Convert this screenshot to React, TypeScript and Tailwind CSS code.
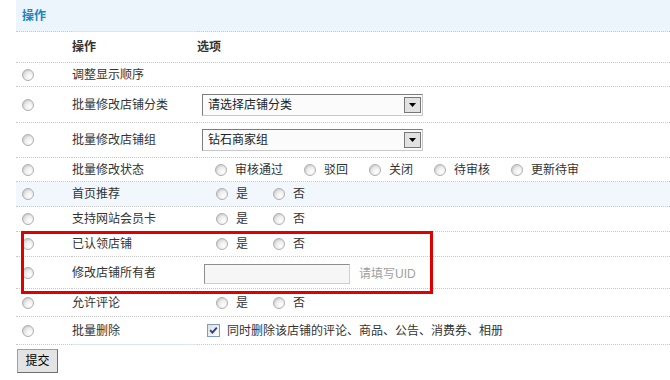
import React from 'react';

const font = "font-['Liberation_Sans','Noto_Sans_CJK_SC',sans-serif]";

function Radio() {
    return (
        <svg width="12" height="12" viewBox="0 0 12 12" className="shrink-0">
            <defs>
                <radialGradient id="radioFill" cx="65%" cy="68%" r="75%">
                    <stop offset="0" stopColor="#ffffff" />
                    <stop offset="0.55" stopColor="#ececec" />
                    <stop offset="1" stopColor="#c4c4c4" />
                </radialGradient>
            </defs>
            <circle cx="6" cy="6" r="5.5" fill="url(#radioFill)" stroke="#b0b0b0" />
        </svg>
    );
}

function Checkbox() {
    return (
        <svg width="13" height="13" viewBox="0 0 13 13" className="shrink-0">
            <defs>
                <linearGradient id="cbFill" x1="0" y1="0" x2="1" y2="1">
                    <stop offset="0" stopColor="#dcdcd7" />
                    <stop offset="1" stopColor="#ffffff" />
                </linearGradient>
            </defs>
            <rect x="0.5" y="0.5" width="12" height="12" fill="url(#cbFill)" stroke="#7f9db9" />
            <path d="M3.2 6.2 L5.4 8.6 L9.8 3.6" fill="none" stroke="#21399c" strokeWidth="1.8" />
        </svg>
    );
}

function Select({ label }: { label: string }) {
    return (
        <div className="ml-[5px] flex h-[22px] w-[221px] items-center justify-between border border-t-[#7c7c7c] border-l-[#7c7c7c] border-r-[#c8c8c8] border-b-[#c8c8c8] bg-[#fbfbfb] pl-[5px] pr-[1px] text-[#222]">
            <span>{label}</span>
            <div className="flex h-[16px] w-[17px] items-center justify-center border border-[#777] bg-[#e2e2e2]">
                <svg width="7" height="4" viewBox="0 0 7 4">
                    <path d="M0 0 H7 L3.5 4 Z" fill="#000" />
                </svg>
            </div>
        </div>
    );
}

function Option({ label }: { label: string }) {
    return (
        <span className="flex items-center">
            <Radio />
            <span className="ml-2">{label}</span>
        </span>
    );
}

function YesNo() {
    return (
        <div className="flex items-center gap-[25px] pl-[19px]">
            <Option label="是" />
            <Option label="否" />
        </div>
    );
}

function Row({ height, label, hover, last, children }: {
    height: string;
    label: string;
    hover?: boolean;
    last?: boolean;
    children?: React.ReactNode;
}) {
    return (
        <div className={`flex ${height} ${hover ? 'bg-[#f1f7fc]' : ''}`}>
            <div className="flex w-[56px] items-center border-b border-dotted border-[#c9c9c9] pl-[6px]">
                <Radio />
            </div>
            <div className={`flex w-[125px] items-center ${last ? 'border-b border-solid border-[#dbe8f3]' : 'border-b border-dotted border-[#c9c9c9]'}`}>
                {label}
            </div>
            <div className="flex flex-1 items-center border-b border-dotted border-[#c9c9c9]">
                {children}
            </div>
        </div>
    );
}

export default function App() {
    return (
        <div className={`relative h-[380px] w-[670px] overflow-hidden bg-white text-[12px] leading-none text-[#333] ${font}`}>
            <div className="pl-4">
                {/* Title band */}
                <div className="flex h-[32px] bg-[#edf5fc]">
                    <div className="flex w-[56px] items-center border-b border-dotted border-[#c9c9c9] pl-[6px] font-bold text-[#1786bf]">
                        操作
                    </div>
                    <div className="w-[125px] border-b border-solid border-[#dbe8f3]" />
                    <div className="flex-1 border-b border-dotted border-[#c9c9c9]" />
                </div>

                {/* Column headers */}
                <div className="flex h-[31px] border-b border-dotted border-[#c9c9c9] font-bold">
                    <div className="w-[56px]" />
                    <div className="flex w-[125px] items-center">操作</div>
                    <div className="flex items-center">选项</div>
                </div>

                <Row height="h-[24px]" label="调整显示顺序" />
                <Row height="h-[36px]" label="批量修改店铺分类">
                    <Select label="请选择店铺分类" />
                </Row>
                <Row height="h-[35px]" label="批量修改店铺组">
                    <Select label="钻石商家组" />
                </Row>
                <Row height="h-[24px]" label="批量修改状态">
                    <div className="flex items-center gap-[21px] pl-[18px]">
                        <Option label="审核通过" />
                        <Option label="驳回" />
                        <Option label="关闭" />
                        <Option label="待审核" />
                        <Option label="更新待审" />
                    </div>
                </Row>
                <Row height="h-[25px]" label="首页推荐" hover>
                    <YesNo />
                </Row>
                <Row height="h-[25px]" label="支持网站会员卡">
                    <YesNo />
                </Row>
                <Row height="h-[25px]" label="已认领店铺">
                    <YesNo />
                </Row>
                <Row height="h-[32px]" label="修改店铺所有者">
                    <div className="flex items-center pt-[3px]">
                        <div className="ml-[7px] h-[20px] w-[146px] border border-t-[#8e8e8e] border-l-[#8e8e8e] border-r-[#cfcfcf] border-b-[#cfcfcf] bg-[#f6f6f6]" />
                        <span className="ml-[9px] text-[#a0a0a0]">请填写UID</span>
                    </div>
                </Row>
                <Row height="h-[28px]" label="允许评论">
                    <YesNo />
                </Row>
                <Row height="h-[28px]" label="批量删除" last>
                    <div className="flex items-center pl-[10px]">
                        <Checkbox />
                        <span className="ml-[7px]">同时删除该店铺的评论、商品、公告、消费券、相册</span>
                    </div>
                </Row>

                <button className="mt-[4px] ml-[1px] flex h-[24px] w-[41px] items-center justify-center border border-[#a0a0a0] border-r-[#6f6f6f] border-b-[#6f6f6f] bg-[#e3e3e3] text-[12px] text-black">
                    提交
                </button>
            </div>

            {/* Red annotation box */}
            <div className="absolute left-[21px] top-[231px] h-[63px] w-[412px] border-[3px] border-[#e00000]" />
        </div>
    );
}
